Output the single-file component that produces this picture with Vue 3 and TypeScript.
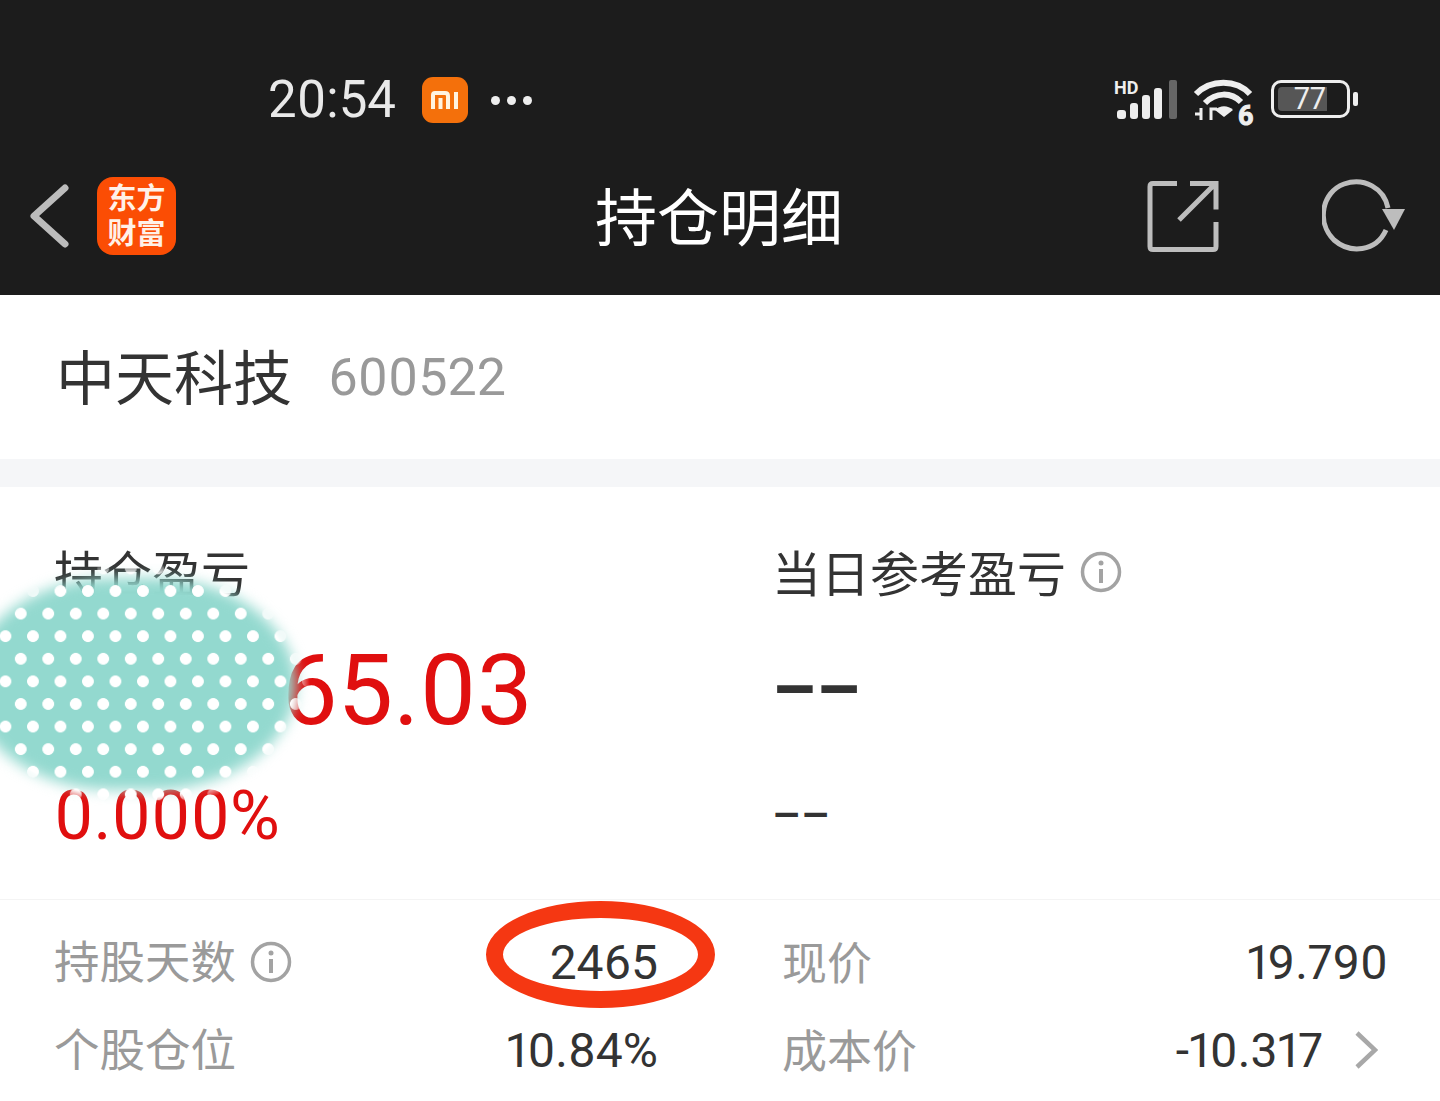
<template>
  <div class="page">
    <div class="top-bar">
      <div class="status">
        <div class="status-left">
          <span class="time">20:54</span>
          <span class="mi-badge">
            <svg width="28" height="18" viewBox="0 0 28 18" fill="none" stroke="#fff3e0" stroke-width="4">
              <path d="M2 18V4q0-2 2-2h10q3 0 3 3v13M9.500 7v11" />
              <path d="M25 1v17" />
            </svg>
          </span>
          <span class="more"><i></i><i></i><i></i></span>
        </div>
        <div class="status-right">
          <svg class="signal" width="66" height="44" viewBox="0 0 66 44">
            <text x="0" y="15" class="hd">HD</text>
            <rect x="3" y="31" width="9" height="9" rx="3" fill="#eee" />
            <rect x="16" y="24" width="8" height="16" rx="3" fill="#eee" />
            <rect x="28" y="16" width="8" height="24" rx="3" fill="#eee" />
            <rect x="40" y="9" width="8" height="31" rx="3" fill="#eee" />
            <rect x="55" y="1" width="8" height="39" rx="2" fill="#666" />
          </svg>
          <svg width="66" height="50" viewBox="0 0 66 50" fill="none" stroke="#eee" class="wifi">
            <path d="M5 17C20 2 45 2 59 17" stroke-width="6" />
            <path d="M14 26C25 15 40 15 50 25" stroke-width="6" />
            <path d="M24 33c5-5 13-5 18 0l-9 7z" fill="#eee" stroke="none" />
            <path d="M10 31v12M4 37h6M20 43V32h6" stroke-width="3" />
            <text x="47" y="48" class="six">6</text>
          </svg>
          <div class="battery">
            <div class="battery-body">
              <div class="battery-fill"></div>
              <span class="battery-num">77</span>
            </div>
            <div class="battery-tip"></div>
          </div>
        </div>
      </div>
      <div class="nav">
        <div class="nav-left">
          <svg class="back" width="40" height="64" viewBox="0 0 40 64" fill="none" stroke="#bcbcbc" stroke-width="7" stroke-linecap="round" stroke-linejoin="round">
            <path d="M35 4 4 32l31 28" />
          </svg>
          <div class="app-icon"><span>东方</span><span>财富</span></div>
        </div>
        <div class="nav-title">持仓明细</div>
        <div class="nav-right">
          <svg width="72" height="72" viewBox="0 0 72 72" fill="none" stroke="#bdbdbd" stroke-width="5">
            <path d="M30 3.500H6q-3 0-3 3v60q0 3 3 3h60q3 0 3-3V42" />
            <path d="M43 3.500h26v26M68 4 32 40" />
          </svg>
          <svg width="86" height="76" viewBox="0 0 86 76" fill="none">
            <path d="M64 52C54 74 28 76 12 62-6 44 0 14 22 6c20-7 40 4 44 24" stroke="#bdbdbd" stroke-width="5" />
            <path d="M60 31h23L72 52z" fill="#bdbdbd" />
          </svg>
        </div>
      </div>
    </div>

    <div class="stock-head">
      <span class="stock-name">中天科技</span>
      <span class="stock-code">600522</span>
    </div>
    <div class="gap"></div>

    <div class="summary">
      <div class="summary-col">
        <div class="sum-label">持仓盈亏</div>
        <div class="sum-value red hidden-start">65.03</div>
        <div class="sum-sub red">0.000%</div>
      </div>
      <div class="summary-col col-b">
        <div class="sum-label">当日参考盈亏
          <svg class="info" width="42" height="42" viewBox="0 0 42 42" fill="none" stroke="#a3a3a3" stroke-width="3.500">
            <circle cx="21" cy="21" r="18.500" />
            <path d="M21 18v14" stroke-width="4" />
            <circle cx="21" cy="12" r="2.500" fill="#a3a3a3" stroke="none" />
          </svg>
        </div>
        <div class="sum-value dash">––</div>
        <div class="sum-sub dash-sub">––</div>
      </div>
    </div>

    <div class="detail">
      <div v-for="row in rows" :key="row.label" class="detail-row" :class="{ 'right-col': row.right }">
        <span class="detail-label">
          {{ row.label }}
          <svg v-if="row.info" class="info" width="42" height="42" viewBox="0 0 42 42" fill="none" stroke="#a3a3a3" stroke-width="3.500">
            <circle cx="21" cy="21" r="18.500" />
            <path d="M21 18v14" stroke-width="4" />
            <circle cx="21" cy="12" r="2.500" fill="#a3a3a3" stroke="none" />
          </svg>
        </span>
        <span class="detail-value">
          {{ row.value }}
          <svg v-if="row.arrow" class="chev" width="24" height="38" viewBox="0 0 24 38" fill="none" stroke="#a8a8a8" stroke-width="4.500">
            <path d="M3 2l18 17L3 36" />
          </svg>
        </span>
      </div>
    </div>

    <div class="blob"></div>
    <div class="blob-dots"></div>
    <div class="circle-mark"></div>
  </div>
</template>

<script setup lang="ts">
interface Row {
  label: string
  value: string
  right?: boolean
  info?: boolean
  arrow?: boolean
}

const rows: Row[] = [
  { label: '持股天数', value: '2465', info: true },
  { label: '现价', value: '19.790', right: true },
  { label: '个股仓位', value: '10.84%' },
  { label: '成本价', value: '-10.317', right: true, arrow: true },
]
</script>

<style>
html, body { margin: 0; background: #fff; overflow: hidden; }
</style>

<style scoped>
.page { position: relative; width: 1440px; height: 1101px; overflow: hidden; background: #fff; font-family: Roboto, "Noto Sans CJK SC", sans-serif; color: #333; font-feature-settings: "pnum"; }
.top-bar { height: 295px; background: #1c1c1c; display: flex; flex-direction: column; }
.status { height: 165px; padding: 36px 82px 0 268px; box-sizing: border-box; display: flex; justify-content: space-between; align-items: flex-start; }
.status-left { display: flex; align-items: center; height: 128px; }
.time { font-size: 51px; line-height: 60px; color: #e9e9e9; width: 154px; }
.mi-badge { width: 46px; height: 46px; border-radius: 11px; background: #f4700b; display: flex; align-items: center; justify-content: center; }
.more { display: flex; gap: 7px; margin-left: 23px; }
.more i { width: 9px; height: 9px; border-radius: 50%; background: #eee; }
.status-right { display: flex; align-items: flex-start; margin-top: 43px; margin-left: auto; }
.signal { overflow: visible; }
.hd { font: 700 18px Roboto, sans-serif; fill: #eee; }
.six { font: 700 27px Roboto, sans-serif; fill: #eee; }
.wifi { margin: -2px 0 0 11px; overflow: visible; }
.battery { display: flex; align-items: center; margin: 1px 0 0 14px; }
.battery-body { position: relative; width: 79px; height: 38px; box-sizing: border-box; border: 3.5px solid #eee; border-radius: 10px; padding: 4px; }
.battery-fill { width: 49px; height: 100%; background: #565656; border-radius: 4px 0 0 4px; }
.battery-num { position: absolute; left: 20px; top: -1px; font-size: 31px; line-height: 34px; color: #eee; }
.battery-tip { width: 5px; height: 14px; margin-left: 3px; background: #eee; border-radius: 2px; }

.nav { flex: 1; display: grid; grid-template-columns: 1fr auto 1fr; align-items: center; padding: 0 32px 28px 30px; }
.nav-left { display: flex; align-items: center; gap: 27px; }
.app-icon { width: 79px; height: 78px; border-radius: 16px; background: #fb4d04; color: #fff1e8; display: flex; flex-direction: column; align-items: center; justify-content: center; font-size: 29px; line-height: 35px; font-weight: 700; font-family: "Noto Sans CJK SC", sans-serif; }
.app-icon span { position: relative; top: -2px; }
.nav-title { font-family: "Noto Sans CJK SC", sans-serif; font-size: 62px; line-height: 70px; margin-bottom: 5px; color: #fff; }
.nav-right { display: flex; justify-content: flex-end; align-items: center; gap: 103px; }

.stock-head { height: 164px; display: flex; align-items: center; padding-left: 56px; gap: 36px; }
.stock-name { font-family: "Noto Sans CJK SC", sans-serif; font-size: 59px; line-height: 70px; margin-bottom: 5px; color: #333; }
.stock-code { font-size: 52px; color: #999; }
.gap { height: 28px; background: #f5f6f8; }

.summary { height: 413px; box-sizing: border-box; padding: 53px 0 0 54px; display: grid; grid-template-columns: 721px 1fr; border-bottom: 1px solid #f4f4f4; }
.col-b { margin-left: -3px; }
.sum-label { display: flex; align-items: center; gap: 14px; height: 60px; font-family: "Noto Sans CJK SC", sans-serif; font-size: 49px; color: #333; }
.sum-label .info { margin-top: 4px; }
.sum-value { height: 100px; line-height: 100px; margin-top: 40px; font-size: 99px; }
.sum-sub { height: 80px; line-height: 80px; margin-top: 36px; font-size: 68px; }
.red { color: #e00f0f; }
.hidden-start { padding-left: 227px; }
.dash { font-size: 70px; font-weight: 700; color: #333; }
.dash-sub { font-size: 45px; font-weight: 500; color: #333; }

.detail { padding: 18px 54px 0 54px; display: grid; grid-template-columns: 604px 604px; column-gap: 124px; }
.detail-row { height: 88px; display: flex; justify-content: space-between; align-items: center; }
.detail-label { display: flex; align-items: center; gap: 14px; font-family: "Noto Sans CJK SC", sans-serif; font-size: 45.500px; line-height: 56px; margin-top: -6px; color: #9a9a9a; }
.detail-label .info { margin-top: 5px; }
.detail-value { display: flex; align-items: center; gap: 31px; font-size: 48px; color: #333; }
.chev { margin-right: 10px; }
.right-col .detail-label { font-size: 45px; margin-top: -3px; }
.right-col .detail-value { margin-right: -2px; }

.blob { position: absolute; left: -30px; top: 578px; width: 326px; height: 212px; background: #93d9cf; border-radius: 44% / 50%; filter: blur(7px); }
.blob-dots {
  position: absolute; left: -40px; top: 562px; width: 350px; height: 248px;
  background-image: radial-gradient(circle, #fff 5.5px, transparent 6.2px), radial-gradient(circle, #fff 5.5px, transparent 6.2px);
  background-size: 27.5px 45.2px;
  background-position: 59.2px 6.4px, 47px 29px;
  -webkit-mask-image: radial-gradient(ellipse closest-side, #000 90%, transparent 100%);
  mask-image: radial-gradient(ellipse closest-side, #000 90%, transparent 100%);
}
.circle-mark { position: absolute; left: 486px; top: 901px; width: 229px; height: 107px; box-sizing: border-box; border: 17px solid #f53712; border-radius: 50%; }
</style>
